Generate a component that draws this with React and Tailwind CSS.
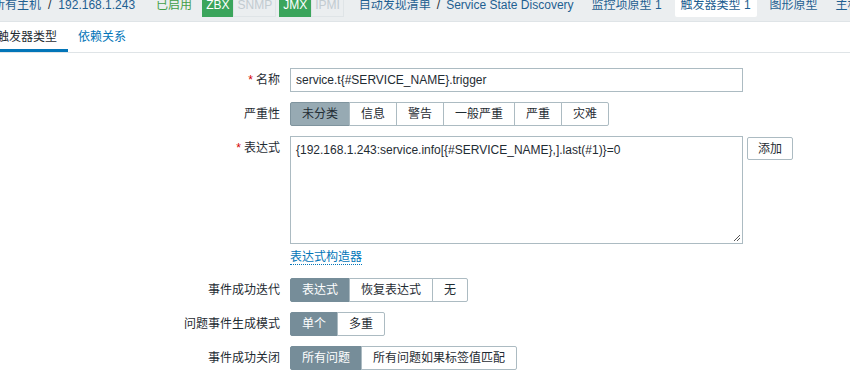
import React from "react";

const font = { fontFamily: '"Liberation Sans", Arial, "Noto Sans CJK SC", sans-serif' };

const severities = ["未分类", "信息", "警告", "一般严重", "严重", "灾难"];

function Segmented({ items, active, first }) {
  return (
    <div className="flex h-[24px]">
      {items.map((label, i) => {
        const on = i === active;
        let cls = on
          ? first
            ? "bg-[#97aab3] border-[#7f949e] text-[#1f2c33]"
            : "bg-[#768d99] border-[#768d99] text-white"
          : "bg-white border-[#acbbc2] text-[#1f2c33]";
        return (
          <div
            key={label}
            className={`flex items-center border px-[11px] text-[12px] ${cls} ${i > 0 ? "-ml-px" : ""} ${
              i === 0 ? "rounded-l-[2px]" : ""
            } ${i === items.length - 1 ? "rounded-r-[2px]" : ""}`}
          >
            {label}
          </div>
        );
      })}
    </div>
  );
}

function Row({ label, required, children, className = "" }) {
  return (
    <div className={`flex ${className}`}>
      <div className="w-[290px] pr-[10px] text-right text-[12px] text-[#1f2c33] leading-[24px] shrink-0">
        {required && <span className="text-[#d40000] mr-[3px]">*</span>}
        {label}
      </div>
      <div className="flex-1">{children}</div>
    </div>
  );
}

function Badge({ text, on }) {
  return (
    <span
      className={`h-[24px] flex items-center px-[3px] text-[12px] border ${
        on ? "bg-[#3ba55c] border-[#3ba55c] text-white" : "bg-[#ebeef0] border-[#dfe4e7] text-[#c2cbd0]"
      }`}
    >
      {text}
    </span>
  );
}

export default function App() {
  return (
    <div className="w-[850px] h-[375px] bg-white overflow-hidden" style={font}>
      {/* top host navigation */}
      <div className="h-[22px] bg-[#ebeef0] border-b border-[#dfe4e7] overflow-hidden">
        <div className="flex items-center h-[24px] -mt-[7px] -ml-[7px] text-[12px] whitespace-nowrap">
          <span className="text-[#1e5f91]">所有主机</span>
          <span className="text-[#1f2c33] mx-[7px]">/</span>
          <span className="text-[#1e5f91]">192.168.1.243</span>
          <span className="text-[#429e47] ml-[21px]">已启用</span>
          <div className="flex ml-[10px]">
            <Badge text="ZBX" on />
            <Badge text="SNMP" />
            <span className="w-[3px]" />
            <Badge text="JMX" on />
            <Badge text="IPMI" />
          </div>
          <span className="text-[#1e5f91] ml-[15px]">自动发现清单</span>
          <span className="text-[#1f2c33] mx-[6px]">/</span>
          <span className="text-[#1e5f91]">Service State Discovery</span>
          <span className="text-[#1e5f91] ml-[18px]">监控项原型 1</span>
          <span className="bg-white text-[#1e5f91] ml-[13px] px-[6px] h-[24px] flex items-center rounded-b-[2px]">
            触发器类型 1
          </span>
          <span className="text-[#1e5f91] ml-[13px]">图形原型</span>
          <span className="text-[#1e5f91] ml-[18px]">主机原型</span>
        </div>
      </div>

      {/* tabs */}
      <div className="flex h-[31px] border-b border-[#dfe4e7] text-[12px] -ml-[14px]">
        <div className="relative px-[11px] flex items-center text-[#1f2c33]">
          触发器类型
          <div className="absolute left-0 right-0 bottom-0 h-[3px] bg-[#0275b8]" />
        </div>
        <div className="px-[10px] flex items-center text-[#0275b8]">依赖关系</div>
      </div>

      {/* form */}
      <div className="pt-[15px] flex flex-col gap-[10px]">
        <Row label="名称" required>
          <div className="w-[453px] h-[24px] border border-[#acbbc2] flex items-center px-[5px] text-[12px] text-[#1f2c33]">
            service.t{"{#SERVICE_NAME}"}.trigger
          </div>
        </Row>

        <Row label="严重性">
          <Segmented items={severities} active={0} first />
        </Row>

        <Row label="表达式" required>
          <div className="flex items-start">
            <div className="relative w-[453px] h-[108px] border border-[#acbbc2] px-[5px] pt-[4px] text-[12px] text-[#1f2c33]">
              {"{192.168.1.243:service.info[{#SERVICE_NAME},].last(#1)}=0"}
              <svg className="absolute right-[1px] bottom-[1px]" width="9" height="9" viewBox="0 0 9 9">
                <path d="M8 2L2 8M8 5L5 8" stroke="#555" strokeWidth="1" />
              </svg>
            </div>
            <div className="ml-[4px] mt-[1px] h-[23px] px-[10px] border border-[#acbbc2] rounded-[2px] flex items-center text-[12px] text-[#1f2c33]">
              添加
            </div>
          </div>
          <div className="mt-[5px] text-[12px] text-[#0275b8] leading-[16px]">
            <span className="border-b border-dotted border-[#0275b8]">表达式构造器</span>
          </div>
        </Row>

        <Row label="事件成功迭代" className="mt-[3px]">
          <Segmented items={["表达式", "恢复表达式", "无"]} active={0} />
        </Row>

        <Row label="问题事件生成模式">
          <Segmented items={["单个", "多重"]} active={0} />
        </Row>

        <Row label="事件成功关闭">
          <Segmented items={["所有问题", "所有问题如果标签值匹配"]} active={0} />
        </Row>
      </div>
    </div>
  );
}
